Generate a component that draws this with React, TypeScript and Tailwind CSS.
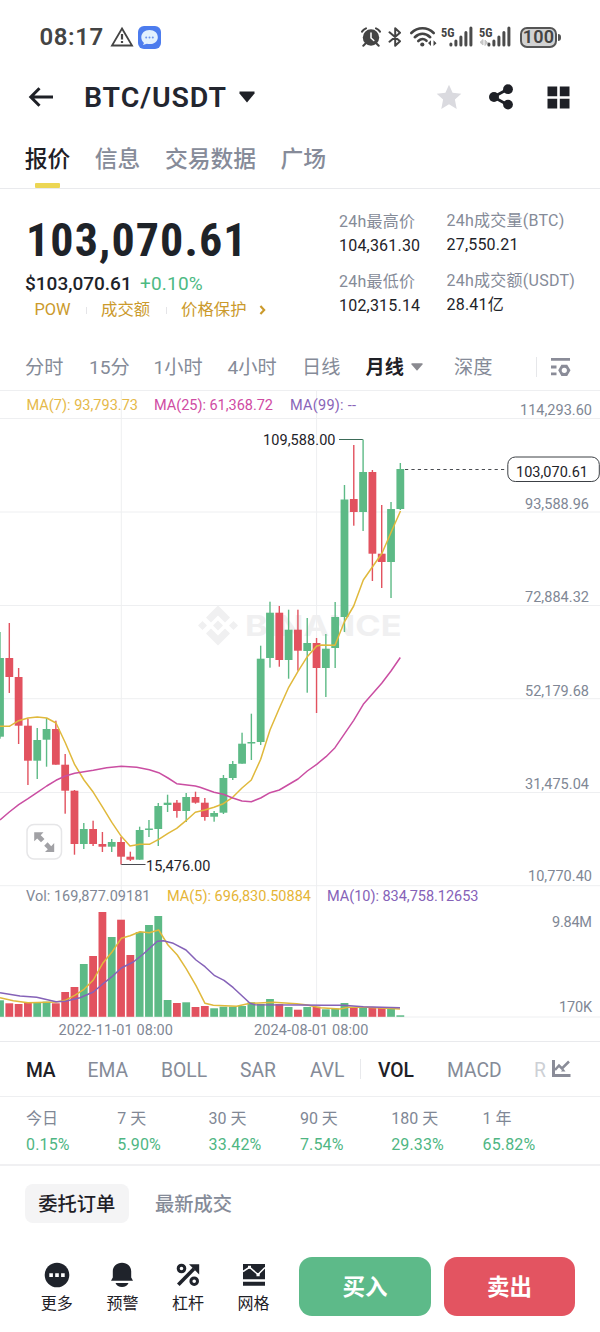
import React from "react";

type Candle = [up: number, top: number, bottom: number, high: number, low: number, volume: number];

const GREEN = "#5dba86";
const RED = "#e2525f";
const STEP = 9.31;
const VOLUME_BASE = 1016.8;

const candles: Candle[] = [
  [1, 658, 736.7, 632, 738.7, 1000.3],
  [0, 658, 677, 623, 693, 1003.3],
  [0, 677, 725.7, 668, 744, 1004],
  [0, 725.7, 760.7, 718.7, 785, 1002.7],
  [1, 740, 760.7, 728, 779, 1002.7],
  [1, 729, 739.7, 718, 766.7, 1001.7],
  [0, 729, 764.7, 720.7, 764.7, 1003.3],
  [0, 764.7, 790.7, 754, 813.7, 992],
  [0, 790.7, 844, 790, 854.7, 987],
  [1, 829, 844, 823, 849, 964],
  [0, 829, 844, 820.7, 846, 956],
  [0, 844, 846.7, 832, 852, 912],
  [1, 842, 846.7, 839, 852, 937],
  [0, 842, 856.7, 837, 864.5, 919.7],
  [0, 856.7, 859.7, 851.7, 861, 955],
  [1, 830, 859.7, 826.7, 859.7, 932],
  [1, 828.5, 830, 820, 837, 925],
  [1, 806, 829, 803, 846, 916],
  [1, 802.7, 805, 794.7, 812, 1000],
  [0, 802.7, 811, 800, 817.7, 1003],
  [1, 797, 811, 793, 822, 1002.3],
  [0, 797, 802.7, 791.7, 803.7, 1007],
  [0, 802.7, 817, 798, 820.7, 1006],
  [1, 813, 816.7, 811, 821.7, 1008.3],
  [1, 778, 812.7, 775, 814, 1006.7],
  [1, 764, 778, 761, 780, 1006.7],
  [1, 743.7, 763.7, 732.7, 763.7, 1006],
  [1, 742, 743.5, 713.7, 760, 1002.3],
  [1, 658.7, 742, 645.7, 745, 1004],
  [1, 612.7, 658, 601.7, 667.7, 999],
  [0, 612.7, 660, 606, 666.7, 1004],
  [1, 629.7, 660, 609.7, 678.7, 1007],
  [0, 629.7, 650.7, 609.7, 670.7, 1009.7],
  [1, 643, 651, 618, 692.7, 1007],
  [0, 643, 668, 638, 713, 1006.7],
  [1, 648.7, 668, 634, 697, 1009.3],
  [1, 617, 648, 602, 668, 1008.7],
  [1, 499.5, 617, 485, 632, 1003],
  [0, 499, 512, 445, 525.7, 1007.7],
  [1, 472, 512, 439.5, 531, 1007.3],
  [0, 472, 553.7, 470, 581, 1008],
  [0, 553.7, 562, 505, 588, 1008],
  [1, 509, 562, 502, 598, 1008],
  [1, 469, 509, 463, 510, 1015.3],
];

const ma7 =
  "0,726.3 9.3,726.3 18.7,720.7 28,718 37.3,717 46.7,718 56,723 65.3,742.7 74.7,764.7 84,780 93.3,792.3 102.7,807.3 112,822.7 121.3,836.3 130,846 140,844.3 149.3,844.3 158.7,839.3 168,833.3 176.7,828.3 186,820.7 195.3,812.3 204.7,810 214,807.3 223.3,803.7 232.7,797.3 242,788 251.3,780 260.7,759.3 270,730 279.3,708.3 288.7,687.3 298,671.3 307.3,656.7 316.7,646 321.7,645 335,645.3 344.3,622 353.7,606 363.3,580 372.7,566.5 382,553.3 391.3,531.7 400.5,511";
const ma25 =
  "0,820 9.3,812 18.7,804.7 28,798.7 37.3,792.3 46.7,786 56,780.3 65.3,776 74.7,773.3 93.3,770.3 106.7,767.7 121.3,766.3 136.7,767.3 149.3,769.7 158.7,772.7 168,778 176.7,783.7 195.3,786 200,787.3 214,792.3 223.3,794.3 232.7,798 242,801 251.3,801.7 260.7,798 270,792.7 279.3,790 298,779 307.3,771 316.7,764.3 326,756.7 335,747.7 353.7,720.3 363.3,704.3 381.7,683.3 391,671 400.3,657.5";
const volMa5 =
  "0,997.7 13.3,1000.7 28,1002.7 56,1002 65.3,1000.3 74.7,995.3 84,989.3 93.3,980 102.7,963.3 112,952 121.3,938.3 130,935.7 140,931.7 149.3,932.7 158.7,930 168,945 177.3,955 186,968.3 196,985.7 205,1003.3 213.3,1005.3 236.7,1006.3 250,1003.3 273.3,1002.3 296.7,1003.7 307.3,1005 320,1007.7 340,1009 348.3,1007.3 366.7,1007.3 400,1009";
const volMa10 =
  "0,992.7 20,996 36.7,997.3 56,1001.7 65.3,1001.3 80,997.7 93.3,992 102.7,984 112,976.7 121.3,968 133.3,962 143.3,954 157.3,941.3 163.3,940.7 173.3,943.3 186,950 196,960 205,966.7 214.7,975.7 224,980.3 233.3,987.7 250,1003.3 255,1004.7 300,1005 323.3,1005.3 343.3,1005.3 363.3,1006.7 400,1007.7";

interface ChartTextProps {
  x: number;
  y: number;
  w: number;
  fill?: string;
  children: string;
}

function ChartText({ x, y, w, fill = "#808795", children }: ChartTextProps) {
  return (
    <text x={x} y={y} textLength={w} fill={fill} fontSize="14.5">
      {children}
    </text>
  );
}

function Chart() {
  return (
    <svg viewBox="0 391 600 651" className="block h-[651px] w-[600px] shrink-0">
      <g stroke="#eeeff1" strokeWidth="1">
        {[418.5, 512, 605.5, 698.7, 792.5, 885.7, 1017].map((y) => (
          <line key={y} x1="0" x2="600" y1={y} y2={y} />
        ))}
        <line x1="121.3" x2="121.3" y1="391" y2="1017" />
        <line x1="316.6" x2="316.6" y1="391" y2="1017" />
      </g>
      <line x1="0" x2="600" y1="1041.5" y2="1041.5" stroke="#e9eaed" />

      <g fill="#f0f0f1">
        <path d="M218 605.5 230 617.5 225 622.5 218 615.5 211 622.5 206 617.5ZM202.500 621 207 625.500 202.500 630 198 625.500ZM218 620.500 223 625.500 218 630.500 213 625.500ZM233.500 621 238 625.500 233.500 630 229 625.500ZM206 633.500 211 628.500 218 635.500 225 628.500 230 633.500 218 645.500Z" />
        <text x="245" y="635.5" fontSize="28.500" fontWeight="700" textLength="156.500" lengthAdjust="spacingAndGlyphs" fontFamily="Inter">
          BINANCE
        </text>
      </g>

      {candles.map(([up, top, bottom, high, low, volume], i) => {
        const x = i * STEP;
        const color = up ? GREEN : RED;
        return (
          <g key={i} fill={color}>
            <rect x={x - 0.7} y={high} width="1.4" height={low - high} />
            <rect x={x - 3.9} y={top} width="7.8" height={bottom - top} />
            <rect x={x - 3.9} y={volume} width="7.8" height={VOLUME_BASE - volume} />
          </g>
        );
      })}

      <g fill="none" strokeWidth="1.5" strokeLinejoin="round">
        <polyline points={ma7} stroke="#e0b93c" />
        <polyline points={ma25} stroke="#ca4ea2" />
        <polyline points={volMa5} stroke="#e0b93c" />
        <polyline points={volMa10} stroke="#8562b8" />
      </g>

      <ChartText x={26.500} y={409.5} w={111.5} fill="#e5b94a">MA(7): 93,793.73</ChartText>
      <ChartText x={154} y={409.5} w={119} fill="#cf4ba3">MA(25): 61,368.72</ChartText>
      <ChartText x={290} y={409.5} w={66} fill="#8864b8">MA(99): --</ChartText>

      <ChartText x={520} y={415.3} w={72}>114,293.60</ChartText>
      <ChartText x={525} y={508.7} w={64}>93,588.96</ChartText>
      <ChartText x={525} y={602} w={64}>72,884.32</ChartText>
      <ChartText x={525} y={695.7} w={64}>52,179.68</ChartText>
      <ChartText x={525} y={789.3} w={64}>31,475.04</ChartText>
      <ChartText x={528} y={881.3} w={64}>10,770.40</ChartText>
      <ChartText x={552} y={927} w={40}>9.84M</ChartText>
      <ChartText x={559} y={1012} w={33}>170K</ChartText>

      <path d="M339 439.5H362.800" stroke="#3b6b58" />
      <ChartText x={263} y={445} w={72.500} fill="#1e2329">109,588.00</ChartText>
      <path d="M121.300 864.5H145.500" stroke="#4a4a50" />
      <ChartText x={146} y={870.5} w={64.500} fill="#1e2329">15,476.00</ChartText>

      <path d="M405 469.5H507" stroke="#4a4d52" strokeWidth="1.200" strokeDasharray="3.200 3.200" />
      <rect x="507.800" y="457" width="91.500" height="24.500" rx="7.500" fill="#fff" stroke="#3c4045" />
      <ChartText x={516} y={476.5} w={72} fill="#1e2329">103,070.61</ChartText>

      <rect x="27" y="824.500" width="34.500" height="34.500" rx="7" fill="#fff" stroke="#e6e6e8" strokeWidth="1.500" />
      <path
        d="M34.200 832.300H43.500L40.700 835.200 44.500 839 41 842.200 37.200 838.400 34.200 841.300ZM54.200 852H45L47.800 849.200 44.200 845.700 47.600 842.300 51.200 846.200 54.200 843Z"
        fill="#a1a1a5"
      />

      <ChartText x={26} y={900.5} w={124.500}>Vol: 169,877.09181</ChartText>
      <ChartText x={167} y={900.5} w={144} fill="#e5b537">MA(5): 696,830.50884</ChartText>
      <ChartText x={327} y={900.5} w={151.500} fill="#8562b8">MA(10): 834,758.12653</ChartText>
      <ChartText x={58.500} y={1035.300} w={114.500}>2022-11-01 08:00</ChartText>
      <ChartText x={254} y={1035.300} w={114.500}>2024-08-01 08:00</ChartText>
    </svg>
  );
}

function Signal({ faint }: { faint?: boolean }) {
  return (
    <svg viewBox="0 0 34 24" className="h-[24px] w-[34px] overflow-visible">
      <text x="0" y="11.500" fontSize="12.500" fontWeight="700" textLength="13.500" lengthAdjust="spacingAndGlyphs" fill="#444" className="[font-stretch:75%]">
        5G
      </text>
      {faint && <path d="M4 14.500V20L1 17.300ZM6 15V20.500L8.500 17.500Z" fill="#c6c6c6" stroke="#c6c6c6" />}
      <g stroke="#4b4b4b" strokeWidth="3" strokeLinecap="round">
        <path d="M11.500 18.500V19.500M16.500 15.500V19.500M21.500 11.500V19.500M26.500 7V19.500M31.500 2.500V19.500" transform="translate(-1.600 .5)" />
      </g>
    </svg>
  );
}

function StatusBar() {
  return (
    <div className="flex h-[74px] items-center pl-[39.5px] text-[#444]">
      <span className="w-[70px] text-[24px] font-semibold leading-[24px] tracking-[0.6px]">08:17</span>
      <svg viewBox="0 0 24 22" className="h-[22px] w-[24px]" fill="none" stroke="#444" strokeWidth="1.800">
        <path d="M12 2.500 22 19.500H2Z" />
        <path d="M12 8V13.500M12 15V17" strokeWidth="2.200" />
      </svg>
      <svg viewBox="0 0 23 23" className="ml-[4px] h-[23px] w-[23px]">
        <rect width="23" height="23" rx="6" fill="#4c7cee" />
        <path d="M11.500 3.900C6.700 3.900 3.300 7 3.300 11.200c0 2.400 1.100 4.400 2.700 5.700L4.900 19.100l4-1.300c.8.200 1.700.3 2.600.3 4.900 0 8.300-2.800 8.300-6.900 0-4.300-3.400-7.300-8.300-7.300Z" fill="#e3f1fe" />
        <g fill="#6d95ee">
          <circle cx="8.200" cy="11.500" r="1" />
          <circle cx="11.500" cy="11.500" r="1" />
          <circle cx="14.800" cy="11.500" r="1" />
        </g>
      </svg>
      <svg viewBox="0 0 20 20" className="ml-[200px] h-[20px] w-[20px]" fill="none" stroke="#444" strokeLinecap="round">
        <circle cx="10" cy="10.500" r="8.200" fill="#444" stroke="none" />
        <path d="M1 4.600C2 3 3.300 2 5 1.300M19 4.600C18 3 16.700 2 15 1.300M4.500 16.500 2.300 18.800M15.500 16.500 17.700 18.800" strokeWidth="2" />
        <path d="M10 6V11L12.800 13.500" stroke="#fff" strokeWidth="1.500" />
      </svg>
      <svg viewBox="0 0 14 20" className="ml-[7.5px] h-[20px] w-[14px]" fill="none" stroke="#444" strokeWidth="2" strokeLinejoin="round" strokeLinecap="round">
        <path d="M1.500 5.300 12 14.300 7.200 18.700V1.300L12 5.700 1.500 14.700" />
      </svg>
      <svg viewBox="0 0 28 22" className="ml-[6.5px] h-[22px] w-[28px]" fill="none" stroke="#444" strokeWidth="2.600" strokeLinecap="round">
        <path d="M2.300 7C8.800 .7 18.200 .7 24.700 7M5.800 11.200C10.500 6.700 16.500 6.700 21.200 11.200M9.300 15C12 12.500 15 12.500 17.500 14.800" />
        <circle cx="13.300" cy="18.500" r="2.100" fill="#444" stroke="none" />
        <path d="M22 14.300V20L19 17ZM24.500 20V14.300L27.500 17.200Z" fill="#444" stroke="none" />
      </svg>
      <div className="ml-[4.5px] flex gap-[4px]">
        <Signal />
        <Signal faint />
      </div>
      <div className="ml-[7px] flex h-[21px] w-[37px] items-center justify-center rounded-[7px] border-2 border-[#555] bg-[#d2d2d2] text-[18px] font-semibold leading-none tracking-[0.2px]">
        100
      </div>
      <div className="ml-px h-[7px] w-[2.5px] rounded-r-full bg-[#555]" />
    </div>
  );
}

function Header() {
  return (
    <div className="flex h-[46px] items-center pl-[28px]">
      <svg viewBox="0 0 26 20" className="h-[20px] w-[26px]" fill="none" stroke="#1e2026" strokeWidth="3">
        <path d="M25 10H3M11.500 1.300 2.800 10 11.500 18.700" />
      </svg>
      <span className="ml-[30px] w-[155px] pt-[3px] text-[28.5px] font-semibold leading-none tracking-[0.9px] text-[#23262f]">BTC/USDT</span>
      <svg viewBox="0 0 16 12" className="h-[12px] w-[16px]" fill="#1e2026">
        <path d="M.5.500H15.500V2.500L8 11.500.5 2.500Z" />
      </svg>
      <svg viewBox="0 0 26 26" className="ml-[180.5px] h-[26px] w-[26px]" fill="#dadadf">
        <path d="M13 .8 16.600 8.800 25.300 9.700 18.900 15.400 20.700 25 13 20.300 5.300 25 7.100 15.400.7 9.700 9.400 8.800Z" />
      </svg>
      <svg viewBox="0 0 24 26" className="ml-[27.5px] h-[26px] w-[24px]" fill="#1e2026">
        <path d="M4.500 13 19 5M4.500 13 19 21" stroke="#1e2026" strokeWidth="2.800" />
        <circle cx="5" cy="13" r="5" />
        <circle cx="19" cy="5.200" r="4.900" />
        <circle cx="19" cy="20.600" r="4.900" />
      </svg>
      <svg viewBox="0 0 23 23" className="ml-[34px] h-[23px] w-[23px]" fill="#1e2026">
        <path d="M.5.500H10.200V10.200H.5ZM12.800.500H22.500V10.200H12.800ZM.5 12.800H10.200V22.500H.5ZM12.800 12.800H22.500V22.500H12.800Z" />
      </svg>
    </div>
  );
}

function Tabs() {
  return (
    <div className="flex h-[69px] gap-[24.5px] border-b border-[#e9eaed] pl-[24.7px] text-[22.8px] font-medium leading-[79px] text-[#868b99]">
      <div className="flex flex-col items-center text-[#1e2026]">
        <span className="h-[63px]">报价</span>
        <span className="h-[5px] w-[25px] rounded-[1px] bg-[#ecd654]" />
      </div>
      <span>信息</span>
      <span>交易数据</span>
      <span>广场</span>
    </div>
  );
}

function Stat({ label, value }: { label: string; value: string }) {
  return (
    <div className="h-[60px] whitespace-nowrap text-[16px]">
      <div className="h-[24px] leading-[24px] tracking-[0.25px] text-[#858b98]">{label}</div>
      <div className="h-[24px] leading-[24px] tracking-[0.2px] text-[#1e2329]">{value}</div>
    </div>
  );
}

function Summary() {
  return (
    <div className="flex h-[153px]">
      <div className="w-[339px] pl-[25px]">
        <div className="mt-[23px] h-[58px] pl-px text-[46px] font-bold leading-[57px] tracking-[1.1px] text-[#1e2329] [font-stretch:75%]">103,070.61</div>
        <div className="flex h-[28px] gap-[9px] text-[19px] leading-[28px]">
          <span className="w-[106px] font-medium text-[#1e2329]">$103,070.61</span>
          <span className="tracking-[0.2px] text-[#4dba83]">+0.10%</span>
        </div>
        <div className="flex h-[24px] items-center pl-[9.5px] text-[16.4px] leading-[24px] text-[#cb9a2c]">
          <span className="w-[51px]">POW</span>
          <span className="h-[7px] w-px bg-[#e5e5e8]" />
          <span className="ml-[14.5px] w-[64.5px]">成交额</span>
          <span className="h-[7px] w-px bg-[#e5e5e8]" />
          <span className="ml-[14.5px] w-[78px]">价格保护</span>
          <svg viewBox="0 0 8 12" className="h-[10px] w-[7px]" fill="none" stroke="#cb9a2c" strokeWidth="2.600">
            <path d="M1.500 1.200 6 6 1.500 10.800" />
          </svg>
        </div>
      </div>
      <div className="w-[107.5px] pt-[21px]">
        <Stat label="24h最高价" value="104,361.30" />
        <Stat label="24h最低价" value="102,315.14" />
      </div>
      <div className="pt-[19.5px]">
        <Stat label="24h成交量(BTC)" value="27,550.21" />
        <Stat label="24h成交额(USDT)" value="28.41亿" />
      </div>
    </div>
  );
}

function Intervals() {
  return (
    <div className="grid h-[49px] grid-cols-[64px_64.5px_74px_74.5px_63.5px_45.5px_43px_82px_14.5px_20px] items-center border-b border-[#eeeff1] pl-[25px] pt-[2px] text-[19.2px] leading-[46px] text-[#858b98]">
      <span className="pt-px">分时</span>
      <span className="pt-px">15分</span>
      <span className="pt-px">1小时</span>
      <span className="pt-px">4小时</span>
      <span className="pt-px">日线</span>
      <span className="pt-px font-bold text-[#1e2026]">月线</span>
      <svg viewBox="0 0 12 8" className="mb-[2px] h-[8px] w-[12px]" fill="#8a8a90">
        <path d="M.5.300H11.500V1.500L6 7.700.5 1.500Z" />
      </svg>
      <span className="pt-px">深度</span>
      <span className="mb-[2px] h-[20px] w-px bg-[#e6e7ea]" />
      <svg viewBox="0 0 20 20" className="mb-[2px] h-[20px] w-[20px]" fill="#8a8c98">
        <path d="M0 1H19V3.800H0ZM0 8.600H5.500V11.400H0ZM0 15.500H5.500V18.300H0Z" />
        <path d="M10.400 7.700H16.200L19.500 13.300 16.200 19H10.400L7.200 13.300ZM13.300 10.700A2.600 2.600 0 1 0 13.300 15.900 2.600 2.600 0 1 0 13.300 10.700Z" fillRule="evenodd" />
      </svg>
    </div>
  );
}

function Indicators() {
  return (
    <div className="grid h-[55px] grid-cols-[61.5px_73.5px_79px_70px_50px_18px_69px_87px_17px_20px] items-center border-b border-[#eeeff1] pl-[26px] pt-[3px] text-[19.3px] leading-none text-[#858b98]">
      <span className="font-medium tracking-[-0.3px] text-[#1e2026]">MA</span>
      <span>EMA</span>
      <span>BOLL</span>
      <span>SAR</span>
      <span>AVL</span>
      <span className="mb-[4px] h-[20px] w-px bg-[#e8e9ec]" />
      <span className="font-medium tracking-[-0.1px] text-[#1e2026]">VOL</span>
      <span>MACD</span>
      <span className="text-[#cdd0d5]">R</span>
      <svg viewBox="0 0 20 20" className="mb-[3px] h-[20px] w-[20px]" fill="none" stroke="#8a8c98">
        <path d="M2.500 1V16.500H19.500" strokeWidth="3" />
        <path d="M4 11 8 6.500 11 9.500 18 2.500" strokeWidth="2.500" />
        <path d="M12.200 9.500 14.500 12.500H10Z" fill="#8a8c98" stroke="none" />
      </svg>
    </div>
  );
}

const performance = [
  ["今日", "0.15%"],
  ["7 天", "5.90%"],
  ["30 天", "33.42%"],
  ["90 天", "7.54%"],
  ["180 天", "29.33%"],
  ["1 年", "65.82%"],
];

function Performance() {
  return (
    <div className="grid h-[69px] grid-cols-[repeat(6,91.3px)] border-b-2 border-[#f0f0f2] pl-[26px] pt-[9px] text-[16px]">
      {performance.map(([label, value]) => (
        <div key={label}>
          <div className="h-[26px] leading-[26px] text-[#808795]">{label}</div>
          <div className="h-[26px] leading-[26px] tracking-[0.15px] text-[#4fb683]">{value}</div>
        </div>
      ))}
    </div>
  );
}

function Action({ label, children }: { label: string; children: React.ReactNode }) {
  return (
    <div className="flex w-[65.6px] flex-col items-center">
      <svg viewBox="0 0 26 26" className="h-[26px] w-[26px]" fill="#1f232b">
        {children}
      </svg>
      <span className="mt-[4px] text-[16px] leading-[24px] text-[#1e2026]">{label}</span>
    </div>
  );
}

function BottomBar() {
  return (
    <div className="flex h-[91px] pl-[24px]">
      <div className="flex pt-[21px]">
        <Action label="更多">
          <circle cx="13" cy="13" r="12.300" />
          <path d="M5.300 11.300H8.900V14.900H5.300ZM11.200 11.300H14.800V14.900H11.200ZM17.100 11.300H20.700V14.900H17.100Z" fill="#fff" />
        </Action>
        <Action label="预警">
          <path d="M13 .8C7.500.800 3.800 4.300 3.800 9.500V15.500L2 18.800H24L22.200 15.500V9.500C22.200 4.300 18.500.800 13 .8ZM6.500 21H19.500C18.500 23.500 16 25 13 25S7.500 23.500 6.500 21Z" />
        </Action>
        <Action label="杠杆">
          <g fill="none" stroke="#1f232b" strokeWidth="3">
            <circle cx="6.500" cy="6.500" r="3.300" />
            <circle cx="19.200" cy="19.200" r="3.300" />
            <path d="M3.300 22.800 19 6.800" strokeWidth="3.600" />
          </g>
          <path d="M14 2.200H24.200V12.500Z" />
        </Action>
        <Action label="网格">
          <path d="M2 2H24V17.200H2ZM2 19.800H24V23.800H2Z" />
          <path d="M2 9.500 8.500 5.300 17 12.500 24 5.500" fill="none" stroke="#fff" strokeWidth="1.500" />
          <path d="M7 3.800H10V6.800H7ZM15.500 11H18.700V14.200H15.500Z" fill="#fff" />
        </Action>
      </div>
      <button className="ml-[13px] mt-[15.500px] h-[59px] w-[131.5px] rounded-[13px] bg-[#5dba89] pt-[4px] text-[22.5px] font-bold text-white">买入</button>
      <button className="ml-[13px] mt-[15.500px] h-[59px] w-[131.5px] rounded-[13px] bg-[#e35461] pt-[4px] text-[22.5px] font-bold text-white">卖出</button>
    </div>
  );
}

export default function App() {
  return (
    <div className="flex h-[1332px] w-[600px] flex-col overflow-hidden bg-white font-['Roboto','Noto_Sans_CJK_SC',sans-serif]">
      <StatusBar />
      <Header />
      <Tabs />
      <Summary />
      <Intervals />
      <Chart />
      <Indicators />
      <Performance />
      <div className="flex h-[75px] items-start gap-[26.5px] pl-[25px] pt-[17.5px] text-[19.3px] font-medium text-[#858b98]">
        <span className="h-[39px] w-[103.500px] rounded-[8px] bg-[#f4f4f5] text-center leading-[42px] text-[#1e2026]">委托订单</span>
        <span className="leading-[42px]">最新成交</span>
      </div>
      <BottomBar />
    </div>
  );
}
